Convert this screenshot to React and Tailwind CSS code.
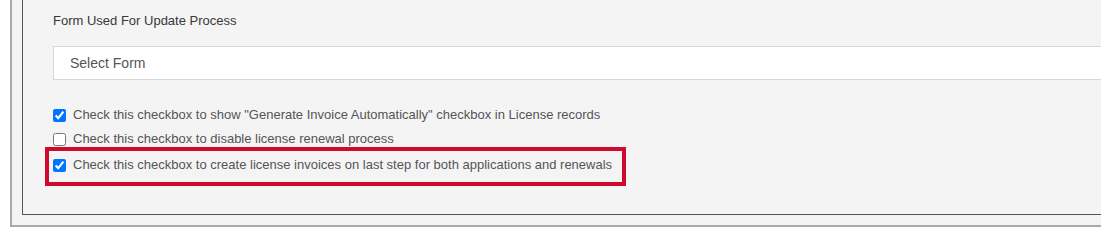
import React, { useState } from "react";

const options = [
  { id: "autoInvoice", label: 'Check this checkbox to show "Generate Invoice Automatically" checkbox in License records', checked: true },
  { id: "disableRenewal", label: "Check this checkbox to disable license renewal process", checked: false },
  { id: "lastStepInvoice", label: "Check this checkbox to create license invoices on last step for both applications and renewals", checked: true },
];

const App = () => {
  const [values, setValues] = useState(
    Object.fromEntries(options.map((o) => [o.id, o.checked]))
  );

  const toggle = (id) => setValues((prev) => ({ ...prev, [id]: !prev[id] }));

  return (
    <div className="w-[1101px] h-[237px] overflow-hidden bg-white font-['Liberation_Sans',Arial,sans-serif]">
      {/* Outer panel */}
      <div className="ml-[10px] w-[1200px] bg-[#f4f4f4] border-l-2 border-b-2 border-[#a9a9a9] pl-[10px] pb-[10px]">
        {/* Inner panel */}
        <div className="relative border-l border-b border-[#555555] pl-[30px] pt-[12px] pb-[37px]">
          <div className="h-[18px] leading-[18px] text-[13px] text-[#383838]">Form Used For Update Process</div>

          <div className="mt-[16px] h-[34px] w-[1100px] bg-white border border-[#d4d7dc] flex items-center pl-[16px] text-[14px] text-[#555555]">
            Select Form
          </div>

          <div className="mt-[23px] flex flex-col">
            {options.map((o, i) => (
              <label
                key={o.id}
                className={`h-[24px] flex items-center gap-[7px] text-[13px] text-[#555555] ${i === 2 ? "mt-[2px]" : ""}`}
              >
                <input
                  type="checkbox"
                  checked={values[o.id]}
                  onChange={() => toggle(o.id)}
                  className="m-0 w-[13px] h-[13px] accent-[#0075ff]"
                />
                <span>{o.label}</span>
              </label>
            ))}
          </div>

          {/* Highlight annotation */}
          <div className="absolute left-[22px] top-[147px] w-[581px] h-[39px] border-4 border-[#cf0a2c] pointer-events-none" />
        </div>
      </div>
    </div>
  );
};

export default App;
